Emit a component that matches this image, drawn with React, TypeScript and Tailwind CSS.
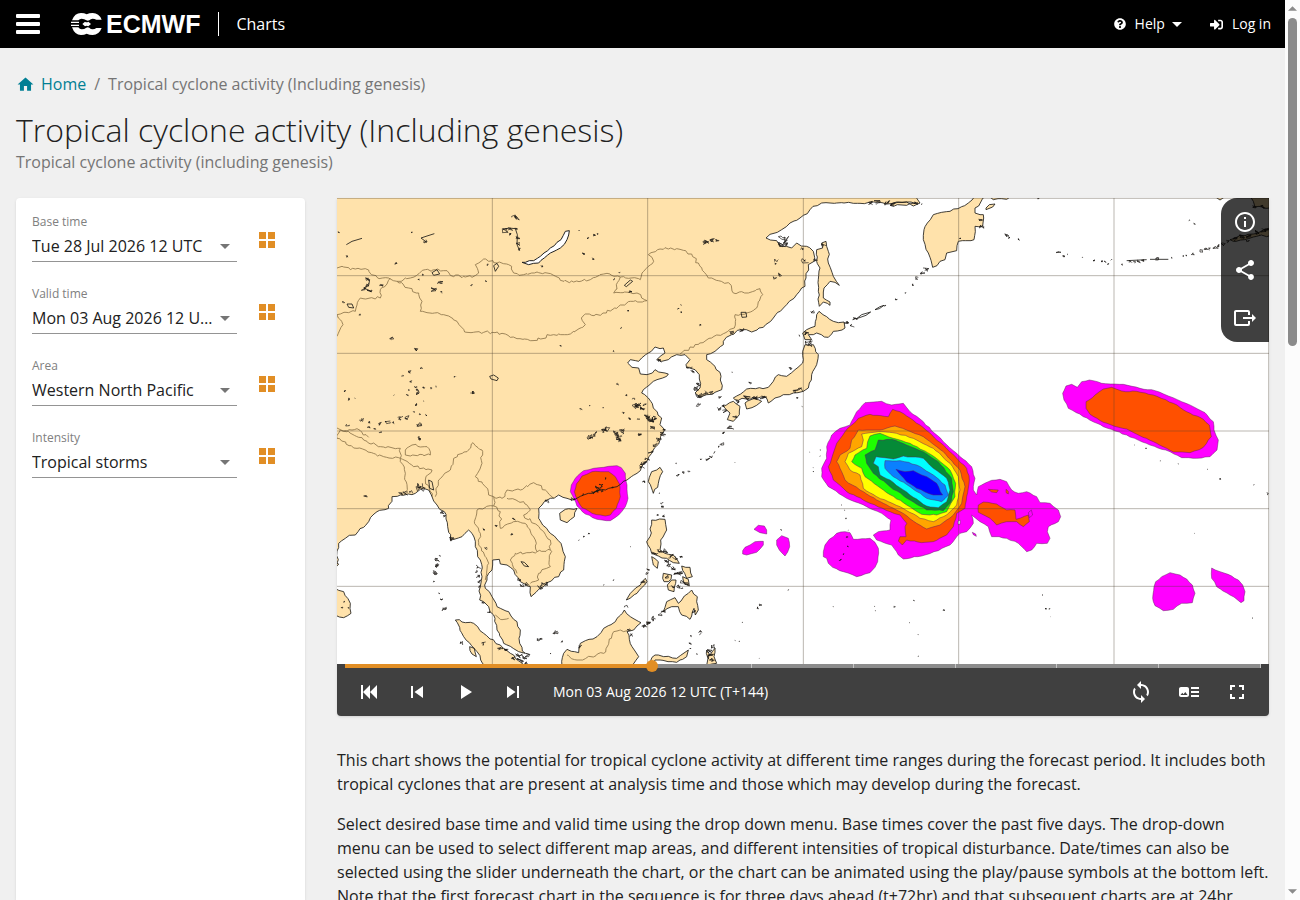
import { useState } from 'react'
import type { ReactNode } from 'react'
import { FaQuestionCircle, FaSignInAlt } from 'react-icons/fa'
import {
  MdArrowDropDown,
  MdFullscreen,
  MdHome,
  MdInfoOutline,
  MdPlayArrow,
  MdShare,
  MdSkipNext,
  MdSkipPrevious,
  MdSync,
} from 'react-icons/md'

type Point = [number, number]

// The map is drawn on a 2796 x 1398 canvas. Shapes are stored per tile,
// [dx, dy] is the tile origin on that canvas.
type Tile = [number, number]
const NW: Tile = [0, 0]
const SW: Tile = [0, 696]
const NC: Tile = [909, 0]
const SC: Tile = [909, 696]
const STORM: Tile = [1419, 546]
const EAST: Tile = [2109, 486]
const NE: Tile = [1749, 0]

const pts = ([dx, dy]: Tile, text: string): Point[] =>
  text.trim().split(/\s+/).map(pair => {
    const [x, y] = pair.split(',').map(Number)
    return [x + dx, y + dy]
  })

const noise = (x: number, y: number) => {
  const v = Math.sin(x * 12.9898 + y * 78.233) * 43758.5453
  return (v - Math.floor(v)) * 2 - 1
}

const line = (points: Point[]) => 'M' + points.map(p => p.map(Math.round).join(' ')).join('L')

// splits every segment into short steps and shakes them a little, like a real coast
const rough = (points: Point[], amount: number, step = 11) => {
  const out: Point[] = []
  points.forEach((p, i) => {
    out.push(p)
    const next = points[i + 1]
    if (!next) return
    const len = Math.hypot(next[0] - p[0], next[1] - p[1])
    if (len > 500) return
    const n = Math.floor(len / step)
    for (let k = 1; k < n; k++) {
      const x = p[0] + ((next[0] - p[0]) * k) / n
      const y = p[1] + ((next[1] - p[1]) * k) / n
      out.push([x + noise(x, y) * amount, y + noise(y, x) * amount])
    }
  })
  return line(out)
}

const mainlandCoast: Point[] = [
  ...pts(NC, `828,-6 840,15 820,24 800,12 770,12 740,18 700,12 640,16 590,15 545,15 510,35 480,60 450,75 425,95 405,105
    378,120 410,128 425,145 455,150 470,135 500,145 520,160 522,190 505,200 498,240 495,265 470,290 440,320 400,360
    370,388 335,402 305,395 275,410 250,430 250,440 225,460 200,470 200,485 225,505 243,535 245,575 225,583 180,597
    165,585 180,570 178,530 165,515 140,510 138,500 150,485 135,470 110,470 85,485 65,490 50,485 75,465 70,450 45,447
    25,465 5,480`),
  ...pts(NW, '905,490 880,485 872,495 885,508 905,510 910,528 930,530'),
  ...pts(NC, '45,515 85,528 80,535 40,550 10,575 5,585 25,600 40,630 65,660 60,680 75,696'),
  ...pts(SC, '75,0 60,30 40,60 20,95'),
  ...pts(SW, `920,100 900,130 870,150 840,170 780,182 740,195 705,210 690,205 665,195 640,205 622,215 605,235 605,265
    640,310 672,340 685,380 680,420 665,440 630,458 605,478 582,500 580,470 550,455 530,420 510,405 490,402 487,388
    467,390 465,420 450,440 445,475 465,500 480,530 515,545 540,575 550,600 548,640 565,670 545,665 500,640 480,600
    470,555 455,530 440,515 428,510 430,470 435,440 430,390 415,350 405,310 395,300 375,320 340,330 332,290 322,245
    300,225 285,200 275,180 250,178 235,190 190,195 165,200 155,235 120,245 95,275 55,315 25,325 5,340 0,400 5,402
    -6,415`),
]

const islands: Point[][] = [
  pts(SC, '25,155 35,125 60,112 68,125 55,160 40,190 25,155'),
  pts(SW, '668,250 685,238 720,235 712,260 690,278 670,270 668,250'),
  pts(SC, '35,270 75,268 80,300 62,330 60,360 75,370 100,375 118,400 100,398 80,385 55,378 35,370 20,335 30,320 35,270'),
  pts(SC, '35,380 55,395 52,415 40,405 35,380'),
  pts(SC, '70,430 95,435 85,455 72,455 70,430'),
  pts(SC, '95,450 108,450 102,485 85,480 82,465 95,450'),
  pts(SC, '125,408 150,412 157,440 140,445 125,408'),
  pts(SC, '128,440 145,448 148,468 135,462 128,440'),
  pts(SC, '70,545 80,515 105,503 115,520 145,490 155,480 172,500 175,540 166,555 162,535 150,568 125,555 115,530 95,530 70,545'),
  pts(SC, '200,660 210,675 225,655 222,680 230,700 200,706 204,685 200,660'),
  pts(SW, '868,510 880,490 925,445 930,455 900,490 868,510'),
  pts(SW, `675,710 680,670 690,658 725,668 730,640 780,620 800,595 835,575 862,540 880,560 912,578 890,600 870,605
    885,650 905,680 880,710`),
  pts(SC, '18,710 45,675 110,685 145,660 140,680 110,697 45,690 30,710'),
  pts(SW, '355,570 410,580 440,610 490,645 530,675 560,710 445,710 420,665 380,620 355,570'),
  pts(SW, '-6,475 20,485 40,520 42,550 20,563 -6,555'),
  pts(SW, '398,650 412,655 418,680 405,672 398,650'),
  pts(NC, `537,340 580,370 612,372 615,390 580,400 565,418 530,405 505,410 515,425 495,425 488,405 500,395 525,385
    530,350 537,340`),
  pts(NC, `495,440 520,440 535,470 530,500 515,530 505,570 490,580 460,585 430,590 405,600 385,615 375,595 320,603
    285,605 280,600 320,573 385,568 400,550 415,530 440,535 465,515 488,495 488,460 495,440`),
  pts(NC, '315,615 345,600 365,610 350,622 320,633 315,615'),
  pts(NC, '250,625 280,610 300,625 298,650 280,670 262,665 270,645 250,625'),
  pts(NC, `530,155 548,150 545,135 558,130 565,160 565,195 580,235 598,262 570,250 552,270 550,300 570,312 570,322
    550,312 538,325 535,280 540,210 530,190 530,155`),
  pts(NE, `38,208 25,165 10,125 12,95 22,75 40,50 90,40 145,15 165,-6 200,-6 165,30 165,45 190,50 188,85 165,85
    162,125 115,130 110,158 80,165 75,185 38,208`),
  pts(NE, '198,30 208,20 225,18 218,27 198,35 198,30'),
  pts(NE, '200,-6 220,5 260,4 275,-6'),
  pts(NE, '930,125 960,112 1000,108 1052,88 1052,112 1010,115 985,122 940,130 930,125'),
  pts(NE, '990,-6 1052,-6 1052,30 1005,27 1000,10 990,-6'),
  pts(NE, '882,-6 900,6 918,-6'),
  pts(NC, '750,22 800,22 825,16 800,12 760,16 750,22'),
]

const baikal = pts(NW, `555,193 590,188 610,175 640,150 672,125 685,100 697,98 690,125 670,150 640,165 605,195 575,200 555,193`)

const borders: Point[][] = [
  [
    ...pts(NW, `0,210 15,205 40,215 85,212 120,238 155,240 180,250 220,240 265,215 330,218 340,232 405,238 425,225
      415,200 440,183 515,200 530,225 560,230 600,222 650,232 670,247 710,252 760,245 800,228 850,237 910,245 920,220
      950,190 945,178`),
    ...pts(NC, `25,170 60,153 110,152 155,168 180,205 205,240 270,258 280,285 325,285 360,272 368,290 350,330 320,345
      285,350 283,390 255,405 215,420 165,440 120,468`),
  ],
  pts(NW, `180,250 215,270 245,285 255,310 250,340 320,350 360,370 383,402 465,403 505,408 520,418 580,428 640,412
    700,408 745,380 733,360 745,348 790,352 845,325 880,310 930,308 900,285 830,285 850,237`),
  pts(NW, '160,240 150,258 130,275 130,300 70,300 55,340 0,350 18,380 0,415'),
  pts(NW, '0,690 20,700 60,692 95,718'),
  pts(SW, '10,0 35,5 80,30 130,50 190,55 190,85 140,80 60,55 0,25 10,0'),
  pts(SW, '205,60 225,45 270,50 280,75 220,78 205,75 205,60'),
  pts(SW, '190,85 205,130 208,185'),
  pts(SW, '190,85 230,110 285,120 265,150 285,200'),
  pts(SW, `295,200 305,150 340,120 350,85 390,65 408,38 435,60 435,100 415,140 445,170 455,195 470,200 495,205 510,180
    550,180 590,158 625,180 650,205`),
  pts(SW, '470,200 470,228 420,240 412,275 430,310 425,345 455,400 445,450'),
  pts(SW, '470,228 490,245 490,295 530,275 570,285 595,330 600,365 640,360 640,330 600,285 560,255 580,240 560,215 510,205'),
  pts(SW, '600,365 535,370 520,390 540,430'),
  pts(SW, '640,360 640,410 605,430 605,450 580,460'),
  pts(SW, '475,555 490,568 515,565'),
  pts(SW, '690,675 720,690 800,670 830,605 870,602'),
]

// small lakes and islets: [x, y, size]
const specks: [Tile, number[][]][] = [
  [NW, [
    [5, 103, 4], [223, 102, 4], [30, 175, 5], [178, 195, 6], [533, 60, 14], [503, 98, 10], [520, 92, 8], [518, 108, 6],
    [538, 95, 6], [543, 118, 6], [541, 138, 8], [545, 153, 7], [265, 130, 7],
    [728, 97, 2], [752, 120, 4], [772, 111, 5], [782, 108, 3], [740, 168, 7], [765, 182, 6], [615, 205, 4],
    [90, 243, 7], [90, 260, 7], [80, 272, 8], [97, 281, 8], [453, 200, 4], [256, 228, 4], [246, 244, 4], [310, 252, 9],
    [290, 275, 10], [310, 282, 6], [403, 261, 4], [445, 250, 4], [134, 262, 6], [20, 312, 6], [68, 352, 6], [165, 420, 7],
    [238, 455, 7], [253, 511, 4], [218, 522, 6], [197, 533, 4], [353, 536, 4], [221, 550, 5], [213, 575, 4],
    [237, 567, 4], [260, 568, 5], [282, 570, 4], [299, 565, 4], [25, 580, 4], [240, 577, 6], [243, 587, 6],
    [210, 591, 4], [170, 591, 2], [407, 583, 8], [38, 604, 5], [53, 600, 4], [262, 608, 3], [234, 618, 8],
    [232, 641, 3], [250, 650, 4], [267, 652, 4], [75, 664, 8], [96, 672, 5], [95, 688, 4], [112, 694, 4],
    [131, 678, 8], [152, 673, 9], [168, 675, 4], [190, 660, 9], [207, 658, 9], [247, 680, 9], [32, 682, 6],
    [131, 702, 4], [731, 634, 6], [758, 623, 2], [798, 628, 2], [842, 559, 4], [868, 591, 4], [853, 389, 4],
    [874, 338, 4], [672, 443, 4], [830, 458, 4], [895, 625, 13], [904, 620, 10], [915, 630, 8], [860, 645, 4],
    [876, 661, 7], [905, 664, 5], [890, 603, 4], [832, 244, 4], [848, 223, 3], [880, 283, 6], [805, 692, 13],
    [798, 697, 10], [850, 700, 13], [845, 712, 11], [778, 703, 4], [760, 716, 8], [246, 718, 4], [907, 708, 6],
    [935, 655, 12], [945, 665, 12],
  ]],
  [NC, [
    [200, 133, 10], [215, 127, 9], [232, 126, 6], [195, 130, 8], [409, 187, 6], [408, 197, 5], [405, 240, 6], [422, 230, 8],
    [487, 152, 5], [495, 188, 12], [430, 125, 16], [425, 140, 12], [440, 138, 10], [551, 138, 9], [526, 185, 7],
    [517, 342, 6], [123, 322, 3], [115, 332, 3], [124, 343, 3], [182, 381, 4], [510, 437, 14], [498, 408, 10],
    [480, 413, 4], [452, 512, 6], [330, 555, 5], [277, 523, 2], [240, 597, 6], [250, 625, 10], [237, 632, 7],
    [255, 640, 8], [285, 655, 8], [320, 601, 12], [345, 597, 12], [370, 598, 10], [180, 590, 14], [200, 585, 10],
    [176, 560, 8], [170, 572, 10], [160, 520, 8], [148, 508, 8], [175, 620, 8], [60, 487, 8], [295, 612, 8],
    [215, 583, 8], [270, 685, 9], [280, 692, 4], [463, 580, 8], [480, 575, 9], [472, 598, 4], [485, 626, 2],
    [250, 705, 3], [30, 665, 13], [20, 655, 10], [45, 660, 10], [38, 690, 8], [5, 630, 8], [15, 620, 6],
    [848, 225, 8], [858, 215, 9], [832, 240, 8], [817, 260, 5], [797, 285, 2], [770, 303, 6], [735, 323, 3],
    [645, 360, 7], [620, 373, 8], [635, 382, 8], [740, 14, 10], [710, 12, 12],
    [760, 20, 8], [690, 15, 8], [830, 14, 7], [304, 395, 9], [275, 405, 7],
  ]],
  [SW, [
    [248, 28, 7], [86, 197, 6], [205, 190, 9], [220, 187, 8], [247, 165, 10], [258, 178, 9], [243, 175, 10], [190, 192, 8],
    [345, 327, 10], [318, 250, 8], [321, 260, 6], [300, 390, 8], [302, 403, 7], [295, 430, 7], [293, 425, 6],
    [291, 455, 4], [299, 410, 6], [307, 490, 3], [315, 510, 6], [322, 537, 8], [310, 378, 3], [425, 410, 8],
    [423, 440, 8], [418, 425, 6], [427, 455, 7], [424, 470, 6], [440, 520, 6], [455, 548, 6], [378, 640, 9],
    [438, 641, 8], [545, 677, 12], [560, 680, 12], [550, 690, 10], [573, 675, 8], [530, 685, 8], [490, 655, 9],
    [508, 662, 8], [567, 700, 7], [605, 630, 6], [612, 626, 4], [657, 608, 9], [672, 634, 4], [640, 670, 2],
    [530, 268, 5], [478, 288, 4], [441, 298, 4], [445, 355, 6], [525, 312, 4], [785, 175, 11],
    [790, 165, 7], [805, 146, 5], [780, 185, 8], [795, 182, 7], [768, 188, 7], [710, 207, 8], [740, 195, 5], [825, 172, 4],
    [845, 25, 9], [840, 12, 10], [830, 8, 8], [758, 25, 9], [775, 15, 7], [850, 30, 7], [908, 12, 6], [925, 95, 9],
    [915, 110, 8], [922, 155, 6], [630, 215, 8], [620, 462, 11], [608, 472, 9], [935, 580, 7], [950, 570, 8],
    [925, 588, 6], [740, 320, 3], [755, 312, 3], [726, 330, 2], [800, 465, 2], [830, 450, 2], [880, 350, 2],
    [867, 530, 6], [20, 515, 3], [34, 533, 3], [15, 533, 3], [875, 600, 7], [880, 615, 8], [730, 650, 6],
    [555, 465, 8], [570, 462, 8], [545, 450, 7],
  ]],
  [SC, [
    [68, 12, 9], [57, 30, 8], [45, 45, 8], [32, 68, 8], [22, 85, 8], [8, 100, 10], [72, 3, 8], [250, 7, 3], [245, 42, 6],
    [237, 50, 4], [205, 88, 7], [212, 80, 6], [183, 88, 3], [222, 68, 4], [285, 98, 2], [107, 100, 3], [115, 134, 7],
    [130, 128, 5], [147, 125, 4], [65, 220, 5], [67, 230, 4], [55, 255, 5], [70, 258, 5], [58, 190, 2], [14, 155, 4],
    [45, 370, 10], [60, 365, 9], [75, 362, 9], [90, 378, 10], [105, 385, 9], [122, 380, 7], [78, 395, 9], [85, 405, 9],
    [98, 415, 9], [110, 435, 10], [120, 430, 9], [130, 455, 9], [118, 470, 8], [125, 475, 7], [97, 470, 8],
    [80, 440, 7], [140, 460, 8], [8, 455, 8], [25, 420, 5], [20, 430, 5], [70, 545, 7], [40, 563, 8], [25, 578, 8],
    [12, 588, 7], [60, 555, 7], [181, 603, 6], [180, 612, 4], [152, 618, 3], [150, 640, 5], [150, 655, 3],
    [218, 650, 8], [212, 680, 11], [208, 665, 9], [217, 690, 9], [357, 533, 6], [362, 525, 5], [446, 480, 3],
    [285, 632, 2], [298, 634, 2], [170, 672, 2], [357, 685, 1], [307, 578, 1], [510, 67, 1], [540, 60, 2],
    [540, 78, 2], [519, 112, 1], [521, 125, 2], [605, 225, 1], [618, 265, 2], [626, 300, 1], [615, 240, 1],
    [621, 320, 3], [622, 350, 4], [611, 373, 3], [600, 390, 5], [424, 300, 2], [580, 530, 1], [703, 530, 1],
    [763, 530, 4], [822, 511, 2], [912, 541, 4], [835, 614, 1], [808, 578, 1], [835, 679, 1], [706, 543, 1],
    [162, 545, 7],
  ]],
  [EAST, [
    [318, 265, 2], [283, 255, 1], [415, 312, 1], [503, 328, 1], [541, 356, 3], [642, 375, 1], [684, 401, 4],
    [464, 521, 1], [17, 747, 3], [28, 747, 2], [8, 705, 1], [638, 775, 2], [360, 303, 1], [32, 770, 1],
  ]],
  [NE, [
    [5, 18, 3], [260, 112, 7], [266, 120, 4], [298, 124, 5], [415, 164, 8], [432, 176, 4], [443, 169, 2], [487, 178, 1],
    [522, 188, 4], [546, 189, 4], [555, 192, 4], [563, 199, 4], [572, 186, 3], [604, 200, 4], [628, 190, 6],
    [642, 192, 5], [655, 190, 6], [668, 188, 5], [712, 182, 7], [755, 179, 4], [790, 174, 3], [800, 174, 3],
    [818, 167, 5], [845, 158, 6], [858, 153, 7], [870, 153, 5], [888, 147, 9], [895, 142, 7], [910, 138, 8],
    [925, 130, 7], [945, 122, 9], [965, 116, 9], [985, 113, 9], [1010, 103, 9], [1030, 98, 9], [1042, 95, 8],
    [985, 128, 6], [1005, 27, 8], [1030, 27, 8], [808, 66, 3], [823, 78, 3], [185, 85, 8], [182, 65, 7],
    [120, 121, 4], [355, 0, 3],
  ]],
]

const scribble = ([dx, dy]: Tile, [x, y, r]: number[]) => {
  const n = 3 + Math.round(r / 2)
  const out: Point[] = []
  for (let k = 0; k < n; k++) {
    out.push([x + dx + noise(x + k * 3, y) * r, y + dy + noise(y + k * 5, x) * r * 0.7])
  }
  return line(out)
}

const specksPath = specks.map(([tile, list]) => list.map(s => scribble(tile, s)).join('')).join('')

const outlines = [
  line(pts(NW, '28,140 45,130 75,121')),
  line(pts(NW, '268,132 252,120 270,114 292,107')),
  line(pts(NW, '498,95 515,90 535,92 541,110 540,140 548,158')),
  line(pts(NW, '87,240 98,245 95,262 80,270 103,280')),
  line(pts(NC, '705,335 720,326 732,322 718,332 705,335')),
  line(pts(NC, '650,362 665,350 692,342 678,352 650,362')),
  line(pts(NE, '620,188 680,185')),
  line(pts(NE, '690,184 745,184')),
  line(pts(NW, '285,224 300,215 308,228 290,232 285,224')),
  line(pts(NW, '470,203 480,196 485,205 475,220 470,203')),
  line(pts(NW, '458,535 470,531 484,540 480,548 462,543 458,535')),
  line(pts(NW, '30,318 45,318 50,330 35,328 30,318')),
  line(pts(NW, '862,262 880,246 887,250 868,266 862,262')),
  line(pts(NC, '303,343 318,343 320,357 306,358 303,343')),
  line(pts(SW, '552,395 562,397 575,410 562,408 552,395')),
  line(pts(SW, '275,150 285,155 290,180 278,175 275,150')),
]

const storms: { fill: string; shape: Point[] }[] = [
  {
    fill: '#ff00ff',
    shape: pts(STORM, `165,68 215,64 245,75 280,70 300,95 340,125 400,185 440,220 485,260 495,295 490,330 500,345 505,320
      535,305 570,298 590,305 605,330 625,340 650,335 680,350 690,368 720,370 745,390 752,410 745,425 715,440 712,455
      720,475 712,490 680,490 665,510 650,515 625,490 590,475 555,470 545,470 535,440 510,425 485,405 490,430 470,455
      450,460 420,495 385,512 345,525 280,537 265,525 245,495 200,480 190,465 205,455 240,450 243,420 215,400 170,380
      110,355 55,320 35,290 35,265 50,235 50,200 65,165 90,145 120,135 140,95`),
  },
  {
    fill: '#ff5000',
    shape: pts(STORM, `145,115 180,103 235,110 248,88 270,95 330,135 400,195 470,265 478,300 470,350 465,385 440,400 430,440
      410,465 370,485 335,488 290,480 277,495 265,483 270,470 288,470 285,440 290,430 270,405 240,395 180,370 110,335
      70,300 55,260 65,235 80,190 105,155`),
  },
  {
    fill: '#ffa500',
    shape: pts(STORM, `145,150 210,150 255,138 290,150 340,170 400,215 450,270 465,320 455,370 430,405 390,435 350,447
      320,430 270,395 200,360 150,330 105,300 95,275 80,245 90,225 120,205 125,180`),
  },
  {
    fill: '#ffff00',
    shape: pts(STORM, `155,162 205,155 260,160 310,175 370,205 420,250 445,290 450,330 440,375 410,405 370,425 330,415
      270,380 200,350 160,325 150,285 120,270 105,245 115,220 155,200 160,180`),
  },
  {
    fill: '#1eff00',
    shape: pts(STORM, `180,168 210,160 250,175 300,190 365,225 420,270 437,310 435,350 410,395 380,405 335,403 290,375
      220,330 165,290 155,265 125,245 135,225 170,205 173,185`),
  },
  {
    fill: '#058a37',
    shape: pts(STORM, `205,180 245,178 290,195 340,215 385,245 425,295 430,335 420,370 400,392 350,390 300,360 240,320
      190,280 170,250 165,225 195,210`),
  },
  {
    fill: '#00ffff',
    shape: pts(STORM, `198,230 250,237 280,228 340,235 370,265 410,295 420,330 410,365 385,383 350,378 300,345 240,300
      210,285 205,260 190,250`),
  },
  {
    fill: '#0a80ff',
    shape: pts(STORM, '225,242 270,242 320,255 370,285 405,315 415,345 395,365 350,355 300,320 250,290 225,265'),
  },
  { fill: '#0000ff', shape: pts(STORM, '258,268 285,275 310,272 350,290 380,310 398,345 370,345 320,325 290,305') },
  { fill: '#ff5000', shape: pts(STORM, `505,375 520,366 560,372 590,390 615,390 618,418 655,405 658,425 640,440 620,425
      590,425 560,435 540,415 505,397`) },
  { fill: '#ff5000', shape: pts(STORM, '535,328 565,330 560,338 545,336') },
  { fill: '#ff5000', shape: pts(STORM, '588,328 595,334 595,342 588,338') },
  { fill: '#ff00ff', shape: pts(STORM, '655,398 664,390 668,405 658,413') },
  { fill: '#ffffff', shape: pts(STORM, '444,423 451,421 450,433 444,433') },
  { fill: '#ff00ff', shape: pts(STORM, '487,457 497,462 499,469 490,464') },
  {
    fill: '#ff00ff',
    shape: pts(STORM, `40,515 45,495 58,478 80,460 105,455 120,458 130,478 180,475 195,487 205,505 203,545 195,562 180,578
      140,590 100,575 68,562 55,550 50,535 40,530`),
  },
  { fill: '#ff00ff', shape: pts(SC, '342,298 355,286 373,288 380,300 380,312 360,308') },
  { fill: '#ff00ff', shape: pts(SC, '308,362 315,352 330,345 345,335 370,334 370,345 350,367 320,375 308,372') },
  { fill: '#ff00ff', shape: pts(SC, '410,330 425,317 445,325 449,350 443,366 435,378 418,360 410,345') },
  {
    fill: '#ff00ff',
    shape: pts(EAST, `68,100 78,78 95,73 112,82 125,65 148,60 185,70 250,73 300,85 345,92 385,108 425,125 460,140 495,158
      520,185 522,210 535,240 531,270 510,290 470,295 425,293 390,275 330,255 260,225 190,200 130,170 85,145 72,120`),
  },
  {
    fill: '#ff5000',
    shape: pts(EAST, `138,125 165,105 190,87 215,82 245,93 290,94 340,105 400,130 440,155 490,178 508,195 514,230 490,262
      450,278 400,276 340,245 270,212 190,187 150,163 138,145`),
  },
  {
    fill: '#ff00ff',
    shape: pts(EAST, `342,680 347,665 365,650 390,638 420,645 440,657 457,675 465,700 457,728 425,730 400,748 370,752
      345,737 338,715`),
  },
  { fill: '#ff00ff', shape: pts(EAST, '515,624 540,635 575,648 595,660 608,675 615,695 612,722 603,728 570,705 530,680 515,655') },
  {
    fill: '#ff00ff',
    shape: pts(SW, `700,185 703,165 715,145 740,122 770,115 800,112 840,107 853,113 865,130 870,165 873,205 865,230
      845,255 820,272 780,268 745,252 720,228`),
  },
  {
    fill: '#ff5000',
    shape: pts(SW, `712,185 718,162 735,138 765,125 815,125 835,140 848,163 850,200 838,235 820,255 805,258 765,250
      735,233 720,208`),
  },
]

const landCorner = 'L-6 -6Z'
const coastPath = rough(mainlandCoast, 4)
const islandPath = islands.map(i => rough(i, 3)).join('')

function CycloneMap() {
  return (
    <svg viewBox="0 0 2796 1398" className="block w-full bg-white" role="img" aria-label="Tropical cyclone activity map">
      <path d={coastPath + landCorner + islandPath} fill="#ffe2ab" />
      <path d={rough(baikal, 2)} fill="#fff" stroke="#222" strokeWidth="3" />
      <path d={borders.map(b => rough(b, 4, 8)).join('')} fill="none" stroke="#8c7449" strokeWidth="2.500" />
      {storms.map((s, i) => (
        <path
          key={i}
          d={rough([...s.shape, s.shape[0]], 1.5) + 'Z'}
          fill={s.fill}
          stroke="#5c1a5c"
          strokeOpacity="0.7"
          strokeWidth="2"
          strokeLinejoin="round"
        />
      ))}
      <path
        d={coastPath + islandPath + outlines.join('')}
        fill="none"
        stroke="#1c1a17"
        strokeWidth="2.500"
        strokeLinejoin="round"
      />
      <path d={specksPath} fill="none" stroke="#1c1a17" strokeWidth="2" />
      <path
        d="M466 0V1398M932 0V1398M1399 0V1398M1865 0V1398M2331 0V1398M0 1H2796M0 233H2796M0 466H2796M0 699H2796M0 932H2796M0 1165H2796M2795 0V1398"
        fill="none"
        stroke="#4a4030"
        strokeOpacity="0.38"
        strokeWidth="3"
      />
    </svg>
  )
}

function MdiIcon({ d, size = 24 }: { d: string; size?: number }) {
  return (
    <svg viewBox="0 0 24 24" width={size} height={size} fill="currentColor" aria-hidden="true">
      <path d={d} />
    </svg>
  )
}

const skipBackward = 'M20,5V19L13,12M6,5V19H4V5M13,5V19L6,12'
const exportIcon =
  'M23,12L19,8V11H10V13H19V16M1,18V6C1,4.89 1.9,4 3,4H15A2,2 0 0,1 17,6V9H15V6H3V18H15V15H17V18A2,2 0 0,1 15,20H3A2,2 0 0,1 1,18Z'
const imageText =
  'M22 13H14V11H22V13M22 7H14V9H22V7M14 17H22V15H14V17M12 9V15C12 16.1 11.1 17 10 17H4C2.9 17 2 16.1 2 15V9C2 7.9 2.9 7 4 7H10C11.1 7 12 7.9 12 9M10.5 15L8.3 12L6.5 14.3L5.3 12.8L3.5 15H10.5Z'

function IconButton({ label, children }: { label: string; children: ReactNode }) {
  return (
    <button aria-label={label} className="flex size-12 items-center justify-center text-white">
      {children}
    </button>
  )
}

function Logo() {
  return (
    <a href="#" aria-label="ECMWF" className="flex items-center gap-1 text-white">
      <svg viewBox="0 0 93 66" width="31" height="22" aria-hidden="true">
        <path
          d="M30 0Q40 0 47 4Q55 0 65 0Q84 0 92 20H76Q71 17 65 17Q59 17 55 22Q50 24 46 22Q40 17 32 17Q26 17 22 22H3Q11 0 30 0z"
          fill="#fff"
        />
        <path
          d="M30 66Q40 66 47 62Q55 66 65 66Q84 66 92 45H76Q71 49 65 49Q59 49 55 44Q50 42 46 44Q40 49 32 49Q26 49 22 43H3Q11 66 30 66z"
          fill="#fff"
        />
        <path d="M0 26H24V30H0zM0 35H24V39H0z" fill="#fff" />
        <path d="M42 26Q47 29 52 26L60 33L52 40Q47 37 42 40L34 33z" fill="#fff" />
      </svg>
      <span className="font-['Liberation_Sans',Arial,sans-serif] text-[25px] leading-6 font-bold">ECMWF</span>
    </a>
  )
}

interface FieldProps {
  id: string
  label: string
  value: string
}

function Field({ id, label, value }: FieldProps) {
  return (
    <div className="flex h-12 items-start gap-[18px]">
      <div className="w-[205px]">
        <label htmlFor={id} className="block text-xs leading-4 text-[#808080]">{label}</label>
        <div className="relative">
          <select
            id={id}
            defaultValue={value}
            className="block h-8 w-full appearance-none overflow-hidden border-b border-[#949494] bg-transparent pr-5 text-base text-ellipsis whitespace-nowrap text-[#212121]"
          >
            <option>{value}</option>
          </select>
          <MdArrowDropDown size={24} className="pointer-events-none absolute top-1 right-0 text-[#757575]" />
        </div>
      </div>
      <button aria-label={`Browse ${label}`} className="flex h-[52px] w-6 items-center justify-center text-[#e18e25]">
        <svg viewBox="0 0 16 16" width="16" height="16" fill="currentColor" aria-hidden="true">
          <path d="M0 0h7v7H0zM9 0h7v7H9zM0 9h7v7H0zM9 9h7v7H9z" />
        </svg>
      </button>
    </div>
  )
}

const fields: FieldProps[] = [
  { id: 'base-time', label: 'Base time', value: 'Tue 28 Jul 2026 12 UTC' },
  { id: 'valid-time', label: 'Valid time', value: 'Mon 03 Aug 2026 12 UTC' },
  { id: 'area', label: 'Area', value: 'Western North Pacific' },
  { id: 'intensity', label: 'Intensity', value: 'Tropical storms' },
]

const STEPS = 9

function TimeSlider() {
  const [step, setStep] = useState(3)

  return (
    <div className="relative mx-2 h-1">
      <div className="flex h-1 bg-[#8c8c8c]">
        {Array.from({ length: STEPS }, (_, i) => (
          <div
            key={i}
            className={`h-1 flex-1 border-r ${i < step ? 'border-[#e18e25] bg-[#e18e25]' : 'border-[#c4c4c4]'}`}
          />
        ))}
      </div>
      <input
        type="range"
        aria-label="Forecast step"
        min={0}
        max={STEPS}
        value={step}
        onChange={e => setStep(Number(e.target.value))}
        className="absolute inset-0 m-0 h-1 w-full appearance-none bg-transparent [&::-webkit-slider-thumb]:size-3 [&::-webkit-slider-thumb]:appearance-none [&::-webkit-slider-thumb]:rounded-full [&::-webkit-slider-thumb]:bg-[#e18e25]"
      />
    </div>
  )
}

function Scrollbar() {
  return (
    <div className="flex w-[15px] shrink-0 flex-col items-center bg-[#fcfcfc] py-1.5" aria-hidden="true">
      <svg width="9" height="5" viewBox="0 0 10 5" fill="#8b8b8b"><path d="M0 5L5 0L10 5z" /></svg>
      <div className="mt-[7px] h-[328px] w-[9px] rounded-full bg-[#8b8b8b]" />
      <svg className="mt-auto" width="9" height="5" viewBox="0 0 10 5" fill="#8b8b8b"><path d="M0 0L5 5L10 0z" /></svg>
    </div>
  )
}

export default function App() {
  return (
    <div className="flex h-screen overflow-hidden font-['Open_Sans','Noto_Sans',sans-serif] text-[#212121]">
      <div className="flex min-w-0 flex-1 flex-col overflow-hidden bg-[#f0f0f0]">
        <header className="flex h-12 shrink-0 items-center bg-black pr-3.5 pl-4 text-white">
          <button aria-label="Menu" className="mr-[31px] flex w-6 flex-col gap-1">
            <span className="h-1 w-6 rounded-[1px] bg-white" />
            <span className="h-1 w-6 rounded-[1px] bg-white" />
            <span className="h-1 w-6 rounded-[1px] bg-white" />
          </button>
          <Logo />
          <a href="#" className="ml-[18px] flex h-6 items-center border-l border-white pl-[17px] text-base">Charts</a>
          <nav className="ml-auto flex items-center gap-7 text-sm">
            <button className="flex items-center">
              <FaQuestionCircle size={12} className="mr-[9px]" />
              Help
              <svg className="ml-[7px]" width="10" height="5" viewBox="0 0 10 5" fill="currentColor" aria-hidden="true">
                <path d="M0 0h10L5 5z" />
              </svg>
            </button>
            <a href="#" className="flex items-center gap-[9px]">
              <FaSignInAlt size={13} />
              Log in
            </a>
          </nav>
        </header>

        <div className="flex min-h-0 flex-1 flex-col px-4 pt-6">
          <nav aria-label="Breadcrumb" className="flex items-center leading-6 text-[#757575]">
            <a href="#" className="flex items-center gap-1.5 text-[#007f94]">
              <MdHome size={19} />
              Home
            </a>
            <span className="mx-2">/</span>
            <span>Tropical cyclone activity (Including genesis)</span>
          </nav>
          <h1 className="mt-3.5 text-[32px] leading-10 font-light">Tropical cyclone activity (Including genesis)</h1>
          <p className="leading-6 text-[#757575]">Tropical cyclone activity (including genesis)</p>

          <div className="mt-6 flex min-h-0 flex-1 gap-8">
            <aside className="flex w-[289px] shrink-0 flex-col gap-6 rounded-t bg-white px-4 pt-4 shadow">
              {fields.map(f => <Field key={f.id} {...f} />)}
            </aside>

            <main className="min-w-0 flex-1">
              <section className="relative rounded-b-sm bg-[#404040] shadow">
                <CycloneMap />
                <div className="absolute top-0 right-0 flex flex-col rounded-l-2xl bg-black/75">
                  <IconButton label="Information"><MdInfoOutline size={24} /></IconButton>
                  <IconButton label="Share"><MdShare size={24} /></IconButton>
                  <IconButton label="Export"><MdiIcon d={exportIcon} /></IconButton>
                </div>
                <TimeSlider />
                <div className="flex items-center px-2">
                  <IconButton label="First step"><MdiIcon d={skipBackward} /></IconButton>
                  <IconButton label="Previous step"><MdSkipPrevious size={24} /></IconButton>
                  <IconButton label="Play"><MdPlayArrow size={24} /></IconButton>
                  <IconButton label="Next step"><MdSkipNext size={24} /></IconButton>
                  <span className="ml-4 text-sm text-white">Mon 03 Aug 2026 12 UTC (T+144)</span>
                  <div className="ml-auto flex">
                    <IconButton label="Loop"><MdSync size={24} /></IconButton>
                    <IconButton label="Legend"><MdiIcon d={imageText} /></IconButton>
                    <IconButton label="Fullscreen"><MdFullscreen size={24} /></IconButton>
                  </div>
                </div>
              </section>

              <div className="mt-8 flex flex-col gap-4 leading-6">
                <p>
                  This chart shows the potential for tropical cyclone activity at different time ranges during the
                  forecast period. It includes both tropical cyclones that are present at analysis time and those which
                  may develop during the forecast.
                </p>
                <p>
                  Select desired base time and valid time using the drop down menu. Base times cover the past five days.
                  The drop-down menu can be used to select different map areas, and different intensities of tropical
                  disturbance. Date/times can also be selected using the slider underneath the chart, or the chart can
                  be animated using the play/pause symbols at the bottom left. Note that the first forecast chart in the
                  sequence is for three days ahead (t+72hr) and that subsequent charts are at 24hr
                </p>
              </div>
            </main>
          </div>
        </div>
      </div>
      <Scrollbar />
    </div>
  )
}
